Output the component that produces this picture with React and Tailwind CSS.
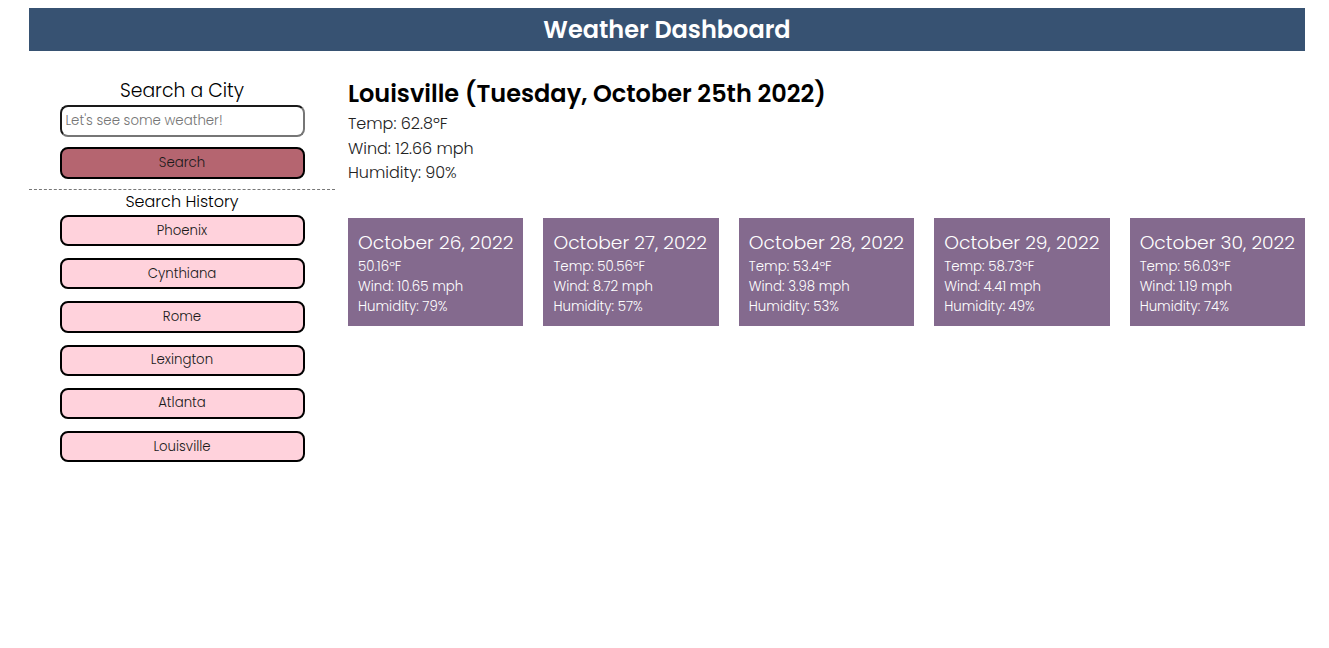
import React from "react";

const history = ["Phoenix", "Cynthiana", "Rome", "Lexington", "Atlanta", "Louisville"];

const forecast = [
  { date: "October 26, 2022", temp: "50.16ºF", wind: "10.65 mph", hum: "79%" },
  { date: "October 27, 2022", temp: "Temp: 50.56ºF", wind: "8.72 mph", hum: "57%" },
  { date: "October 28, 2022", temp: "Temp: 53.4ºF", wind: "3.98 mph", hum: "53%" },
  { date: "October 29, 2022", temp: "Temp: 58.73ºF", wind: "4.41 mph", hum: "49%" },
  { date: "October 30, 2022", temp: "Temp: 56.03ºF", wind: "1.19 mph", hum: "74%" },
];

export default function App() {
  return (
    <div
      className="min-h-[648px] bg-white text-black pt-2"
      style={{ fontFamily: '"Poppins", "Open Sans", "Noto Sans", sans-serif' }}
    >
      <header className="ml-[29px] w-[1276px] h-[43px] bg-[#375272] flex items-center justify-center">
        <h1 className="text-white text-[24px] font-semibold leading-none mt-[1px]">Weather Dashboard</h1>
      </header>

      <div className="ml-[29px] w-[1276px] flex mt-[23px]">
        <aside className="w-[306px] shrink-0 flex flex-col items-center">
          <h2 className="text-[18.8px] font-light leading-[27px] mt-[3px]">Search a City</h2>
          <input
            type="text"
            placeholder="Let's see some weather!"
            className="w-[245px] h-[31.5px] mt-[1px] rounded-[8px] border-2 border-t-[#1a1a1a] border-l-[#1a1a1a] border-r-[#767676] border-b-[#767676] px-[4px] text-[13.33px] font-light placeholder:text-[#757575] outline-none"
          />
          <button className="w-[245px] h-[31.5px] mt-[10.5px] rounded-[8px] border-2 border-black bg-[#b56570] text-[13.33px] font-light text-[#1a1a1a]">
            Search
          </button>
          <div className="w-full border-t border-dashed border-[#777] mt-[10.5px]" />
          <h3 className="text-[16px] font-light leading-[24px]">Search History</h3>
          <div className="flex flex-col gap-[12px] mt-[1px]">
            {history.map((c) => (
              <button
                key={c}
                className="w-[245px] h-[31.2px] rounded-[8px] border-2 border-black bg-[#ffd2dc] text-[13.33px] font-light text-[#1a1a1a]"
              >
                {c}
              </button>
            ))}
          </div>
        </aside>

        <main className="flex-1 ml-[13px]">
          <h2 className="text-[24px] font-semibold leading-[34px] mt-[3px]">Louisville (Tuesday, October 25th 2022)</h2>
          <div className="text-[16px] font-light leading-[24.5px] text-[#222] mt-[1px]">
            <p>Temp: 62.8ºF</p>
            <p>Wind: 12.66 mph</p>
            <p>Humidity: 90%</p>
          </div>

          <div className="flex gap-[20px] mt-[32px]">
            {forecast.map((f) => (
              <div key={f.date} className="flex-1 h-[108px] bg-[#846a8e] text-white px-[10px] pt-[12px]">
                <div className="text-[18.7px] font-light leading-[26px] whitespace-nowrap">{f.date}</div>
                <div className="text-[13.33px] font-light leading-[20px] mt-[1px]">
                  <p>{f.temp}</p>
                  <p>Wind: {f.wind}</p>
                  <p>Humidity: {f.hum}</p>
                </div>
              </div>
            ))}
          </div>
        </main>
      </div>
    </div>
  );
}
